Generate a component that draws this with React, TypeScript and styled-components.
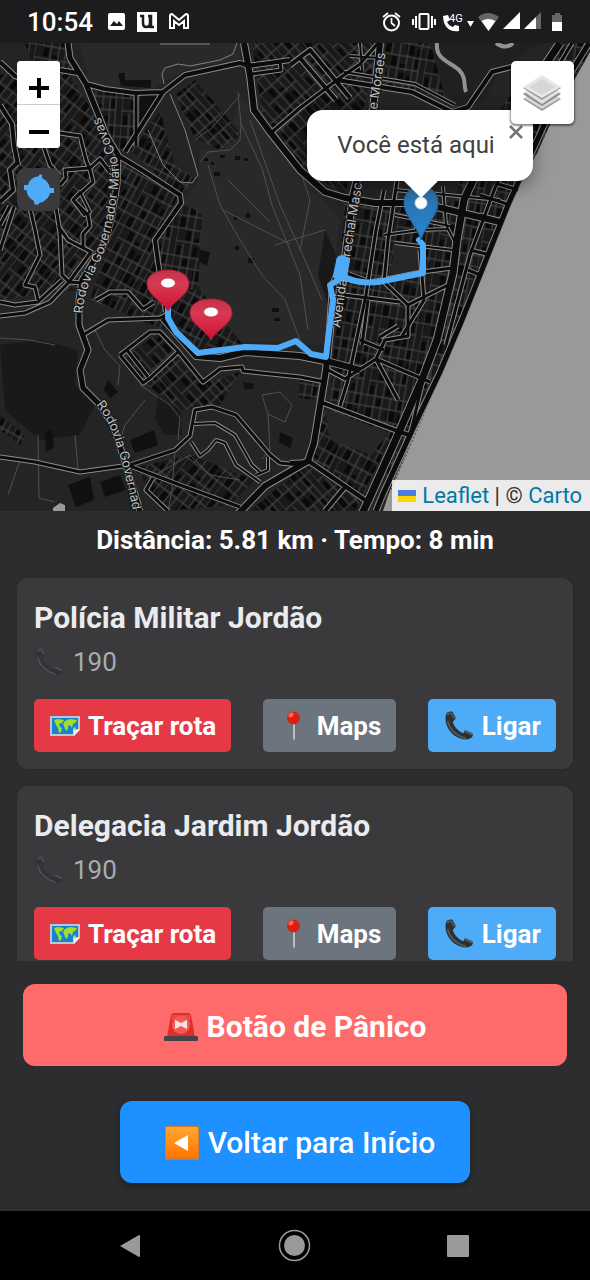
import React from "react";
import styled, { createGlobalStyle, css } from "styled-components";

const GlobalStyle = createGlobalStyle`
  * { box-sizing: border-box; }
  html, body { margin: 0; background: #2d2d2f; }
  body { font-family: Roboto, "Liberation Sans", sans-serif; color: #fff; }
  button { font-family: inherit; cursor: pointer; }
`;

const Shell = styled.div`
  display: flex;
  flex-direction: column;
  height: 100vh;
  background: #2d2d2f;
`;

const StatusBar = styled.header`
  flex: none;
  display: flex;
  align-items: center;
  justify-content: space-between;
  height: 43px;
  padding: 0 26px 0 27px;
  background: #1c1c1e;
`;

const StatusGroup = styled.div<{ $gap: number }>`
  display: flex;
  align-items: center;
  gap: ${(p) => p.$gap}px;
`;

const Clock = styled.time`
  margin-right: 3px;
  font-size: 26px;
  line-height: 32px;
  font-weight: 500;
`;

const MapArea = styled.section`
  position: relative;
  flex: none;
  height: 468px;
  overflow: hidden;
  background: #242424;
`;

const MapCanvas = styled.svg`
  display: block;
  width: 100%;
  height: 100%;
`;

const LeftControls = styled.div`
  position: absolute;
  top: 18px;
  left: 17px;
  display: flex;
  flex-direction: column;
  gap: 20px;
`;

const ZoomBox = styled.div`
  display: flex;
  flex-direction: column;
  width: 43px;
  border-radius: 4px;
  background: #fff;
  overflow: hidden;
`;

const ZoomButton = styled.button`
  display: flex;
  align-items: center;
  justify-content: center;
  height: 43px;
  padding: 10px 0 0;
  border: 0;
  background: #fff;
  & + & {
    height: 44px;
    border-top: 1px solid #ccc;
  }
`;

const LocateButton = styled.button`
  display: flex;
  align-items: center;
  justify-content: center;
  width: 43px;
  height: 43px;
  padding: 0;
  border: 0;
  border-radius: 8px;
  background: #3a3a3c;
`;

const LayersButton = styled.button`
  position: absolute;
  top: 18px;
  right: 16px;
  display: flex;
  align-items: center;
  justify-content: center;
  width: 63px;
  height: 63px;
  padding: 0 2px 0 0;
  border: 0;
  border-radius: 5px;
  background: #fff;
  box-shadow: 0 1px 2px 1px rgba(0, 0, 0, 0.45);
`;

const Popup = styled.div`
  position: absolute;
  top: 67px;
  left: calc(50% + 125px);
  display: flex;
  align-items: center;
  justify-content: center;
  width: 226px;
  height: 71px;
  padding: 0 8px 2px 0;
  transform: translateX(-50%);
  border-radius: 16px;
  background: #fff;
  color: #404040;
  font-size: 24px;
  line-height: 32px;
  white-space: nowrap;
  box-shadow: 0 5px 18px rgba(0, 0, 0, 0.4);
  &::after {
    content: "";
    position: absolute;
    top: 70px;
    left: 96px;
    border: 18px solid transparent;
    border-top-color: #fff;
    border-bottom: 0;
  }
`;

const PopupClose = styled.button`
  position: absolute;
  top: 12px;
  right: 7px;
  display: flex;
  align-items: center;
  justify-content: center;
  width: 20px;
  height: 20px;
  padding: 0;
  border: 0;
  background: transparent;
`;

const Attribution = styled.div`
  position: absolute;
  right: 0;
  bottom: 0;
  display: flex;
  align-items: center;
  gap: 6px;
  height: 31px;
  padding: 0 8px 0 6px;
  background: rgba(255, 255, 255, 0.8);
  color: #333;
  font-size: 22px;
  line-height: 30px;
  white-space: nowrap;
`;

const CreditLink = styled.a`
  color: #0078a8;
  text-decoration: none;
`;

const RouteSummary = styled.p`
  flex: none;
  margin: 0;
  padding: 14px 16px 22px;
  font-size: 26px;
  line-height: 31px;
  font-weight: 700;
  text-align: center;
`;

const StationList = styled.main`
  flex: 1 1 0;
  min-height: 0;
  display: flex;
  flex-direction: column;
  gap: 17px;
  padding: 0 17px;
  overflow-y: auto;
  scrollbar-width: none;
`;

const Card = styled.article`
  flex: none;
  padding: 22px 17px 17px;
  border-radius: 10px;
  background: #3a3a3c;
  box-shadow: 0 0 3px rgba(0, 0, 0, 0.2);
`;

const CardTitle = styled.h2`
  margin: 0;
  color: #e9ebef;
  font-size: 30px;
  line-height: 36px;
  font-weight: 700;
`;

const CardPhone = styled.p`
  display: flex;
  align-items: center;
  gap: 9px;
  margin: 8px 0 19px;
  color: #a5acb3;
  font-size: 26px;
  line-height: 36px;
  & svg { opacity: 0.7; }
`;

const CardActions = styled.div`
  display: flex;
  justify-content: space-between;
`;

const tones = { route: "#e63946", maps: "#6c757d", call: "#4dabf7" };

const ActionButton = styled.button<{ $tone: keyof typeof tones }>`
  display: flex;
  align-items: center;
  gap: 8px;
  height: 53px;
  padding: 0 15px 0 16px;
  border: 0;
  border-radius: 5px;
  background: ${(p) => tones[p.$tone]};
  color: #fff;
  font-size: 26px;
  line-height: 32px;
  font-weight: 700;
  white-space: nowrap;
`;

const Footer = styled.div`
  flex: none;
  display: flex;
  flex-direction: column;
  align-items: center;
  gap: 35px;
  padding: 23px 23px 28px;
`;

const largeButton = css`
  display: flex;
  align-items: center;
  justify-content: center;
  gap: 9px;
  height: 82px;
  border: 0;
  border-radius: 12px;
  color: #fff;
  font-size: 30px;
  line-height: 36px;
`;

const PanicButton = styled.button`
  ${largeButton}
  width: 100%;
  padding-top: 4px;
  background: #ff6b6b;
  font-weight: 700;
`;

const HomeButton = styled.button`
  ${largeButton}
  width: 350px;
  padding: 2px 0 0 10px;
  background: #1e90ff;
  font-weight: 500;
  box-shadow: 0 3px 6px rgba(0, 0, 0, 0.3);
`;

const SystemNav = styled.nav`
  flex: none;
  display: flex;
  align-items: center;
  justify-content: space-between;
  height: 69px;
  padding: 0 120px 0 118px;
  background: #000;
`;

const NavButton = styled.button`
  display: flex;
  padding: 0;
  border: 0;
  background: transparent;
`;

/* ---------- map data ---------- */

type Road = { d: string; w: number };

const roads: Road[] = [
  { d: "M68 43L70 58L86 84L98 114L106 135L118 155L117 185L111 220L105 242L82 280L79 300L79 325L88 350L80 370L83 388L100 405L113 425L125 462L140 511", w: 5 },
  { d: "M60 70L78 73M86 84L105 89L135 93L163 92L185 75L240 63L249 66L290 60", w: 4 },
  { d: "M244 43L250 75L254 110L270 132L300 170L325 192L345 198L375 203L420 203L500 222", w: 6 },
  { d: "M163 92L125 152M117 155L145 172L180 195L181 203L155 240L158 262L166 312", w: 4 },
  { d: "M136 93L136 146", w: 3 },
  { d: "M250 65L280 62L281 70L252 74M272 132L300 108L337 80L360 64L378 43", w: 3 },
  { d: "M290 65L310 50L350 98M300 58L336 100M337 80L412 92L452 112L468 107L492 72L515 66", w: 4 },
  { d: "M344 72L415 84L455 105M350 56L380 58M360 43L362 70", w: 2 },
  { d: "M0 62L15 76L30 82M0 105L12 124L14 145L18 165M18 162L10 170L13 190L0 202", w: 4 },
  { d: "M43 145L50 165L60 176M60 133L80 136L86 160L90 170L93 182L73 200L88 215L90 226L83 234L83 247", w: 3 },
  { d: "M60 185L66 178L65 170L90 168L100 159L110 172", w: 3 },
  { d: "M30 208L35 230L40 255L25 285L35 287L38 300M56 208L60 232L62 275L70 283M58 226L68 240L91 252L69 282L83 283", w: 3 },
  { d: "M0 302L15 305L38 302L62 280M0 316L25 313L50 302L69 282M14 207L0 250M10 206L0 225", w: 3 },
  { d: "M73 200L80 192L90 212L84 215Z", w: 2 },
  { d: "M83 335L108 320L160 318L166 315M96 300L110 292L128 292L143 309L154 302", w: 3 },
  { d: "M120 355L150 332L160 332L178 351L203 382L220 369L242 367L243 371L300 377L325 382M120 355L143 383L150 378L178 352M127 350L148 377", w: 3 },
  { d: "M163 318L196 356L220 358L245 352L300 356L330 362L360 370", w: 6 },
  { d: "M0 457L35 462L80 472L130 465L175 450L190 436L195 410L212 407L236 415L270 455L280 463L300 465", w: 3 },
  { d: "M191 442L200 456L208 450L216 440L225 443L236 465L260 482M194 424L215 423L235 435L252 465L260 472M268 457L268 470L256 475", w: 2 },
  { d: "M130 466L180 485L240 507M153 478L146 490L168 511", w: 3 },
  { d: "M238 514L265 486L308 461L314 443L326 370L330 330L333 285L345 258L353 195L372 120L380 43", w: 6 },
  { d: "M323 403L400 432L412 436M310 462L365 500M345 487L325 511M310 462L290 463", w: 4 },
  { d: "M328 370L345 379L376 359L385 340L408 336L408 305L384 282M340 406L348 380L366 295L376 230L384 190", w: 3 },
  { d: "M397 181L388 240L384 282M368 300L362 345M376 359L430 382M376 359L398 400M380 337L398 326M360 340L384 350", w: 3 },
  { d: "M344 272L370 282L422 272L452 268M408 305L452 283M344 295L400 302M402 336L424 300L420 250", w: 3 },
  { d: "M395 215L450 226M384 235L420 230L448 229M395 243L453 250M443 186L446 225L457 246M418 190L416 230M395 190L500 200", w: 2 },
  { d: "M560 43L522 100L480 165L464 200L457 240L453 273L437 340L423 377L400 430L370 497L362 514", w: 7 },
  { d: "M589 43L560 90L535 145L508 205L484 265L462 320L440 372L410 435L383 494L376 511", w: 5 },
  { d: "M572 43L532 110L495 188L470 255L446 345", w: 3 },
  { d: "M410 436L423 380M470 250L490 255M468 270L480 275M480 215L503 222M495 183L518 190M480 195L510 205", w: 3 },
];

const minorRoads =
  "M200 162L208 152L230 150L240 140L241 124L238 92M240 122L262 168L272 205L300 275L308 330" +
  "M208 165L220 205L240 240L262 275L285 300L300 340M250 120L280 205L305 260L322 300" +
  "M195 140L212 128L240 95M223 210L290 244M228 180L270 222M275 245L325 230M300 170L310 200L300 250" +
  "M0 338L30 340L55 345M95 330L105 350L120 366L118 385M140 385L170 405L180 418L178 440" +
  "M75 435L78 470M38 435L39 498L55 502M20 460L8 495M175 450L172 490L168 511M150 478L190 455L210 475L240 480" +
  "M262 395L280 392L292 405L285 422L268 414ZM268 414L270 450L262 459M145 400L125 425L120 440";

type District = { points: string; pattern: string };

const districts: District[] = [
  { points: "0,75 60,60 95,115 112,150 110,240 75,290 0,300", pattern: "gridA" },
  { points: "25,43 68,43 75,70 40,85", pattern: "gridC" },
  { points: "92,90 134,95 134,145 118,150", pattern: "gridE" },
  { points: "138,95 160,95 140,130", pattern: "gridE" },
  { points: "120,160 178,197 153,240 165,290 200,285 190,340 90,300 108,245", pattern: "gridB" },
  { points: "180,200 202,215 198,290 165,292 157,242", pattern: "gridC" },
  { points: "130,150 160,110 175,165 195,180 180,195", pattern: "gridB" },
  { points: "175,95 195,80 242,135 220,150 195,138", pattern: "gridD" },
  { points: "165,300 200,290 243,345 200,352", pattern: "gridB" },
  { points: "125,355 158,334 200,384 240,372 220,405 180,410 145,383", pattern: "gridD" },
  { points: "252,43 378,43 345,195 300,165 262,112", pattern: "gridD" },
  { points: "385,43 432,43 450,100 385,85", pattern: "gridC" },
  { points: "345,198 500,205 450,340 395,430 330,405", pattern: "gridC" },
  { points: "325,407 395,432 362,495 312,460", pattern: "gridB" },
  { points: "135,468 190,455 255,480 230,505 165,511", pattern: "gridA" },
  { points: "250,511 305,465 360,500 355,511", pattern: "gridD" },
  { points: "470,140 560,43 590,43 590,50 400,500 380,500", pattern: "gridC" },
  { points: "0,415 25,435 20,445 0,430", pattern: "gridB" },
  { points: "300,380 322,385 318,400 298,398", pattern: "gridC" },
];

const patterns = [
  { id: "gridA", angle: 38 },
  { id: "gridB", angle: 28 },
  { id: "gridC", angle: 10 },
  { id: "gridD", angle: -42 },
  { id: "gridE", angle: 4 },
];

const PinShape = ({ x, y, kind }: { x: number; y: number; kind: "red" | "blue" }) =>
  kind === "red" ? (
    <g transform={`translate(${x} ${y})`}>
      <path d="M0 0C-4-9-21-16-21-27C-21-36-12-41 0-41S21-36 21-27C21-16 4-9 0 0Z" fill="url(#redPin)" stroke="#ad1f38" strokeWidth="1" />
      <ellipse cx="0" cy="-28" rx="7" ry="4.5" fill="#fff" />
    </g>
  ) : (
    <g transform={`translate(${x} ${y})`}>
      <path d="M0 0C-3-13-17-24-17-37C-17-48-9-54 0-54S17-48 17-37C17-24 3-13 0 0Z" fill="url(#bluePin)" stroke="#20649a" strokeWidth="1" />
      <circle cx="0" cy="-37" r="6" fill="#fff" stroke="#c6d8e6" />
    </g>
  );

const CityMap = () => (
  <MapCanvas viewBox="0 43 590 468" preserveAspectRatio="xMidYMid slice" role="img" aria-label="Mapa da rota">
    <defs>
      {patterns.map((p) => (
        <pattern key={p.id} id={p.id} width="43" height="52" patternUnits="userSpaceOnUse" patternTransform={`rotate(${p.angle})`}>
          <rect width="43" height="52" fill="#191919" />
          <path d="M2 3h4v9h-4zM10 15h5v7h-5zM18 2h5v9h-5zM26 4h4v7h-4zM33 28h6v8h-6zM1 26h6v10h-6zM9 39h5v9h-5zM22 25h8v10h-8zM18 45h6v4h-6zM32 14h4v9h-4zM32 39h4v9h-4z" fill="#0a0a0a" />
          <path d="M0 0V52M8 0V37M16 0V52M24 12V52M31 0V24M31 37V52M37 0V52M0 13H43M0 24H24M16 37H43M0 37H16M24 24H43M0 50H37" fill="none" stroke="#484848" strokeWidth="1" />
        </pattern>
      ))}
      <linearGradient id="redPin" x1="0" y1="0" x2="0" y2="1">
        <stop offset="0" stopColor="#c2324c" />
        <stop offset="0.35" stopColor="#d83953" />
        <stop offset="1" stopColor="#cf0f33" />
      </linearGradient>
      <linearGradient id="bluePin" x1="0" y1="0" x2="0" y2="1">
        <stop offset="0" stopColor="#2e6ea3" />
        <stop offset="1" stopColor="#2686d3" />
      </linearGradient>
      <path id="lineCovas" d="M83 314C84 285 96 272 104 252C114 225 118 195 119 172C118 150 105 135 94 100" />
      <path id="lineAvenida" d="M340 328L349 265L363 178" />
      <path id="lineMoraes" d="M377 110L386 50" />
      <path id="lineRodovia" d="M96 405C113 424 121 455 134 515" />
    </defs>
    <rect y="43" width="590" height="468" fill="#242424" />
    <path d="M80 43H240V60L185 70L150 90L90 84ZM240 95L340 220L325 345L205 340L170 270L182 205L198 180L200 150L225 150Z" fill="#292929" />
    <path d="M0 345L40 340L78 350L75 385L95 405L80 435L40 440L5 410ZM158 395L180 410L182 435L165 435L155 420ZM325 230L336 255L328 305L318 275Z" fill="#191919" />
    {districts.map((d, i) => (
      <polygon key={i} points={d.points} fill={`url(#${d.pattern})`} />
    ))}
    <path d="M430 43H540L500 70L485 100L465 108L445 98Z" fill="#202020" />
    <path d="M325 409L388 432L372 455L330 440ZM395 245L420 246L420 272L390 274Z" fill="#262626" />
    <path d="M68 485L90 477L94 500L76 507ZM130 440L154 430L158 445L135 453ZM104 390L108 380L118 392L110 398ZM45 432L52 430L54 448L46 452ZM100 482L120 475L126 490L105 497ZM280 432L293 438L290 448L279 442ZM140 95H160L140 125ZM118 73L121 86L151 88V80H125V73ZM200 250L210 252L207 266L199 262ZM243 382L255 384L252 389L245 389Z" fill="#101010" />
    <path d="M204 158h4v3h-4zM211 162h3v3h-3zM220 155h5v3h-5zM235 156h5v4h-5zM244 158h4v3h-4zM214 172h6v4h-6zM246 213h4v5h-4zM234 217h3v3h-3zM235 246h4v4h-4zM248 258h6v5h-6zM272 308h7v4h-7zM274 318h6v3h-6z" fill="#101010" />
    <path d={minorRoads} fill="none" stroke="#505050" strokeWidth="1" />
    <path d="M170 94L185 130L198 175L192 183L180 182L163 165L148 130M164 84L162 74L165 68L178 64L190 66L220 60L233 54L237 43M160 44L210 44" fill="none" stroke="#828282" strokeWidth="1" />
    <path d="M437 43C435 60 451 62 459 70S463 85 466 92M496 43Q506 50 513 43" fill="none" stroke="#929292" strokeWidth="4" />
    <path d="M53 508L60 503L65 505V511H53Z" fill="#999" />
    <path d="M590 52L577 75L552 120L537 153L510 197L490 242L467 307L440 373L417 427L390 490L383 511H590Z" fill="#999" />
    <path d="M588 55L552 119L537 153L511 200L491 245L468 308L441 374L418 428L390 492" fill="none" stroke="#444" strokeWidth="1" strokeDasharray="2 2" />
    <g fill="none" stroke="#8c8c8c" strokeLinejoin="round">
      {roads.map((r, i) => (
        <path key={i} d={r.d} strokeWidth={r.w + 2} />
      ))}
    </g>
    <g fill="none" stroke="#0c0c0c" strokeLinejoin="round">
      {roads.map((r, i) => (
        <path key={i} d={r.d} strokeWidth={r.w} />
      ))}
    </g>
    <g fill="#bdbdbd" stroke="#151515" strokeWidth="2" paintOrder="stroke" fontFamily="Inter, sans-serif" fontSize="13">
      <text><textPath href="#lineCovas">Rodovia Governador Mário Covas</textPath></text>
      <text><textPath href="#lineAvenida">Avenida Marechal Masc</textPath></text>
      <text><textPath href="#lineMoraes">e Moraes</textPath></text>
      <text><textPath href="#lineRodovia">Rodovia Governad</textPath></text>
    </g>
    <path
      d="M168 308L168 318L176 332L198 353L245 347L278 348L296 341L311 354L326 357L333 300L330 285L340 279L343 262L347 260L344 277Q357 284 378 282L423 273L423 245L419 240M339 262L336 276"
      fill="none" stroke="#4dabf7" strokeWidth="6" strokeLinejoin="round" strokeLinecap="round"
    />
    <circle cx="342" cy="261" r="6" fill="#4dabf7" />
    <PinShape kind="red" x={168} y={311} />
    <PinShape kind="red" x={211} y={340} />
    <PinShape kind="blue" x={421} y={240} />
  </MapCanvas>
);

/* ---------- icons ---------- */

const PhoneIcon = () => (
  <svg width="30" height="30" viewBox="0 0 31 31" aria-hidden="true">
    <path d="M2 4C3 1 6 0 9 1L12 7C12 9 10 10 9 11C10 16 15 21 20 23L22 20L29 23C31 25 29 28 26 29C12 32-1 17 2 4Z" fill="#2d3032" />
    <path d="M4 4C5 2 7 2 8 3L10 7M22 21L28 24M4 11C6 19 13 26 22 28" fill="none" stroke="#53585b" strokeWidth="2" strokeLinecap="round" />
  </svg>
);

const WorldMapIcon = () => (
  <svg width="30" height="22" viewBox="0 0 30 22" aria-hidden="true">
    <path d="M0 1H30V15L24 21H0Z" fill="#b9c8cf" />
    <path d="M2 3H28V14L22 19H2Z" fill="#1683d2" />
    <path d="M4 5L8 4L14 5L12 8L9 9L10 12L12 13L11 17L9 18L8 13L6 10ZM15 6L20 4L27 5L25 8L23 9L22 13L20 10L18 11L18 14L16 16L14 11L13 9ZM23 13L26 12L26 14L23 16Z" fill="#a4dc2c" />
    <path d="M30 14L23 15L24 21Z" fill="#eef4f5" />
  </svg>
);

const PushpinIcon = () => (
  <svg width="30" height="32" viewBox="0 0 30 32" aria-hidden="true">
    <path d="M14 14H16V28L15 31L14 28Z" fill="#b9bec2" />
    <circle cx="14.5" cy="8" r="6.5" fill="#d81f12" />
    <ellipse cx="12" cy="5" rx="3" ry="2" fill="#f5695a" transform="rotate(-35 12 5)" />
  </svg>
);

const SirenIcon = () => (
  <svg width="34" height="30" viewBox="0 0 34 30" aria-hidden="true">
    <path d="M7 3Q8 1 10 1H24Q26 1 27 3L31 25H3Z" fill="#dc3029" />
    <path d="M8 3H26L27 8H7Z" fill="#ea4b42" />
    <circle cx="17" cy="13" r="9" fill="#f25b55" />
    <path d="M11 8L17 11L23 8V17L17 14L11 17Z" fill="#ffe1e1" />
    <rect x="0" y="24" width="34" height="5" rx="1" fill="#454348" />
  </svg>
);

const BackSquareIcon = () => (
  <svg width="34" height="34" viewBox="0 0 34 34" aria-hidden="true">
    <defs>
      <linearGradient id="orange" x1="0" y1="0" x2="0" y2="1">
        <stop offset="0" stopColor="#ffa733" />
        <stop offset="1" stopColor="#ff7600" />
      </linearGradient>
    </defs>
    <rect width="34" height="34" rx="2" fill="#cf7b36" />
    <rect x="1" y="1" width="32" height="31" rx="1" fill="url(#orange)" />
    <path d="M9 17L23 9V25Z" fill="#fff" />
  </svg>
);

const LayersIcon = () => (
  <svg width="40" height="38" viewBox="0 0 40 38" aria-hidden="true">
    <path d="M1 25L20 14L39 25L20 37Z" fill="#999" />
    <path d="M2 24L20 13L38 24L20 35Z" fill="#d5d5d5" />
    <path d="M1 20L20 9L39 20L20 32Z" fill="#8c8c8c" />
    <path d="M2 18L20 8L38 18L20 30Z" fill="#e0e0e0" />
    <path d="M1 14L20 2L39 14L20 26Z" fill="#999" />
    <path d="M1 13L20 1L39 13L20 24Z" fill="#e7e7e7" />
    <path d="M7 13L20 5L33 13L20 21Z" fill="#d6d6d6" />
  </svg>
);

const LocateIcon = () => (
  <svg width="34" height="34" viewBox="0 0 34 34" aria-hidden="true">
    <path d="M13 4C16 4 17 3 18 1L20 2V5C24 7 27 10 28 15L32 15V20L28 20C27 24 25 26 22 28L21 29C18 29 17 30 16 32L12 31V28C8 26 6 23 5 20C5 17 4 17 2 17V12H6C7 8 9 6 13 4Z" fill="#4dabf7" />
  </svg>
);

const PictureIcon = () => (
  <svg width="17" height="17" viewBox="0 0 17 17" aria-hidden="true">
    <rect width="17" height="17" rx="2" fill="#fff" />
    <path d="M2 13L6 8L9 11L11 8L15 13Z" fill="#1c1c1e" />
  </svg>
);

const UIcon = () => (
  <svg width="20" height="20" viewBox="0 0 20 20" aria-hidden="true">
    <rect width="20" height="20" fill="#fff" />
    <path d="M3 4H6V11Q6 15 9 15Q13 15 13 11V4M11 4H14V15H17" fill="none" stroke="#1c1c1e" strokeWidth="2.500" />
  </svg>
);

const MailIcon = () => (
  <svg width="20" height="17" viewBox="0 0 20 17" aria-hidden="true">
    <path d="M1 15V3Q1 1 3 1L10 7L17 1Q19 1 19 3V15H15V8L10 12L5 8V15Z" fill="none" stroke="#fff" strokeWidth="2" />
  </svg>
);

const StatusIcons = () => (
  <svg width="182" height="26" viewBox="382 9 182 26" aria-label="Alarme, vibração, 4G, Wi-Fi, bateria" role="img">
    <g fill="none" stroke="#fff" strokeWidth="2">
      <circle cx="391.500" cy="23" r="7.500" />
      <path d="M391.500 18V23L395 26M383 17L388 13M395 13L400 17" strokeWidth="1.700" />
      <rect x="419.500" y="14" width="9" height="15" rx="1" />
      <path d="M416 16V28M413 19V25M432 16V28M435 19V25" />
    </g>
    <path d="M443 16L448 15L450 20L447 22Q449 26 453 27L455 25L459 26V31Q444 33 443 16Z" fill="#fff" />
    <text x="449" y="22" fill="#fff" fontSize="11" fontFamily="Roboto, sans-serif">4G</text>
    <path d="M467 21H474L470.500 27Z" fill="#fff" />
    <path d="M478 17Q488 9 499 17L488.500 31Z" fill="#666" />
    <path d="M481.500 21Q488 17 495.500 21L488.500 31Z" fill="#fff" />
    <path d="M503 29L520 12V29Z" fill="#fff" />
    <path d="M524 29L541 12V29Z" fill="#666" />
    <path d="M524 29L536 17V29Z" fill="#fff" />
    <path d="M552 15H555V13H560V15H562V22H552Z" fill="#666" />
    <path d="M552 22H562V31H552Z" fill="#fff" />
  </svg>
);

const stations = [
  { name: "Polícia Militar Jordão", phone: "190" },
  { name: "Delegacia Jardim Jordão", phone: "190" },
];

const StationCard = ({ name, phone }: { name: string; phone: string }) => (
  <Card>
    <CardTitle>{name}</CardTitle>
    <CardPhone><PhoneIcon />{phone}</CardPhone>
    <CardActions>
      <ActionButton $tone="route"><WorldMapIcon />Traçar rota</ActionButton>
      <ActionButton $tone="maps"><PushpinIcon />Maps</ActionButton>
      <ActionButton $tone="call"><PhoneIcon />Ligar</ActionButton>
    </CardActions>
  </Card>
);

export default function App() {
  return (
    <>
      <GlobalStyle />
      <Shell>
        <StatusBar>
          <StatusGroup $gap={12}>
            <Clock>10:54</Clock>
            <PictureIcon />
            <UIcon />
            <MailIcon />
          </StatusGroup>
          <StatusIcons />
        </StatusBar>
        <MapArea>
          <CityMap />
          <Popup>
            Você está aqui
            <PopupClose aria-label="Fechar">
              <svg width="14" height="14" viewBox="0 0 14 14" aria-hidden="true">
                <path d="M1 1L13 13M13 1L1 13" stroke="#757575" strokeWidth="2.500" />
              </svg>
            </PopupClose>
          </Popup>
          <LeftControls>
            <ZoomBox>
              <ZoomButton aria-label="Aumentar zoom">
                <svg width="20" height="20" viewBox="0 0 20 20" aria-hidden="true"><path d="M0 10H20M10 0V20" stroke="#000" strokeWidth="4" /></svg>
              </ZoomButton>
              <ZoomButton aria-label="Diminuir zoom">
                <svg width="20" height="20" viewBox="0 0 20 20" aria-hidden="true"><path d="M0 10H20" stroke="#000" strokeWidth="4" /></svg>
              </ZoomButton>
            </ZoomBox>
            <LocateButton aria-label="Minha localização"><LocateIcon /></LocateButton>
          </LeftControls>
          <LayersButton aria-label="Camadas"><LayersIcon /></LayersButton>
          <Attribution>
            <svg width="18" height="12" viewBox="0 0 18 12" aria-hidden="true">
              <path d="M0 0H18V6H0Z" fill="#4c7be1" />
              <path d="M0 6H18V12H0Z" fill="#ffd500" />
            </svg>
            <span><CreditLink href="#leaflet">Leaflet</CreditLink> | © <CreditLink href="#carto">Carto</CreditLink></span>
          </Attribution>
        </MapArea>
        <RouteSummary>Distância: 5.81 km · Tempo: 8 min</RouteSummary>
        <StationList>
          {stations.map((s) => <StationCard key={s.name} {...s} />)}
        </StationList>
        <Footer>
          <PanicButton><SirenIcon />Botão de Pânico</PanicButton>
          <HomeButton><BackSquareIcon />Voltar para Início</HomeButton>
        </Footer>
        <SystemNav>
          <NavButton aria-label="Voltar">
            <svg width="24" height="24" viewBox="0 0 24 24" aria-hidden="true"><path d="M2 12L21 1Q22 1 22 2V22Q22 23 21 23Z" fill="#999" /></svg>
          </NavButton>
          <NavButton aria-label="Tela inicial">
            <svg width="33" height="33" viewBox="0 0 33 33" aria-hidden="true">
              <circle cx="16.500" cy="16.500" r="15" fill="none" stroke="#999" strokeWidth="1.500" />
              <circle cx="16.500" cy="16.500" r="10.500" fill="#999" />
            </svg>
          </NavButton>
          <NavButton aria-label="Aplicativos recentes">
            <svg width="24" height="24" viewBox="0 0 24 24" aria-hidden="true"><rect x="1" y="1" width="22" height="22" rx="1" fill="#999" /></svg>
          </NavButton>
        </SystemNav>
      </Shell>
    </>
  );
}
